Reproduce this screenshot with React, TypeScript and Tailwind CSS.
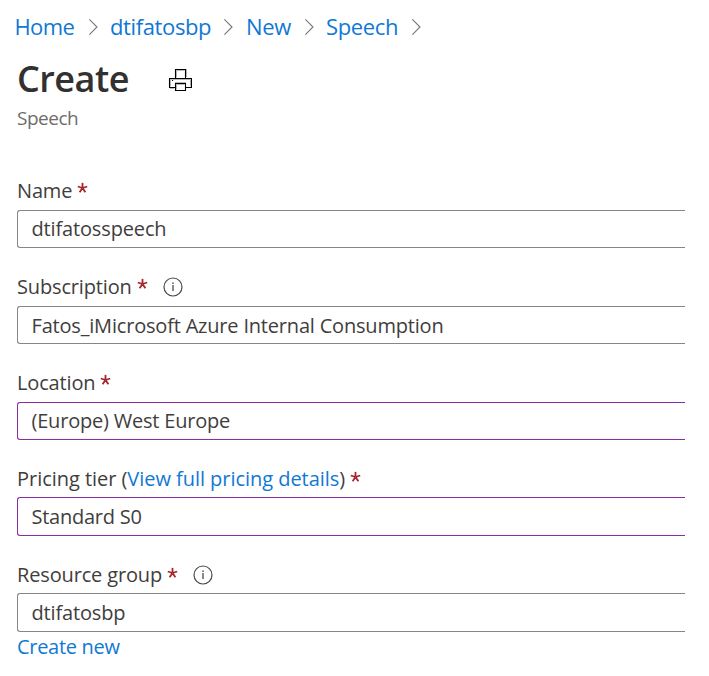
import type { ReactNode } from "react";

function Chevron() {
  return (
    <svg className="h-[18px] w-[9px] shrink-0" viewBox="0 0 9 18" fill="none" stroke="#767676" strokeWidth="1.1">
      <path d="M0.4 1.4 8 9 0.4 16.6" />
    </svg>
  );
}

function Printer() {
  return (
    <svg className="h-[24px] w-[24px] shrink-0" viewBox="0 0 24 24">
      <g fill="none" stroke="#b8b8b8" strokeWidth="1">
        <path d="M8.5 10.5v-7h8M18.5 10V2" />
        <path d="M2.5 19.5v-7h20v7M7 15.5h11M2 21.5h4" />
        <path d="M8.5 22.5v-5h8" />
      </g>
      <g fill="none" stroke="#000" strokeWidth="1.1">
        <path d="M7.5 11V2.5h10V11" />
        <path d="M7 20.5H1.5v-9h22v9H18" />
        <path d="M7.5 16.5h10v7h-10z" />
      </g>
      <path d="M4 13h1v1H4z" fill="#000" />
    </svg>
  );
}

function Info() {
  return (
    <svg className="ml-[15px] h-5 w-5 shrink-0" viewBox="0 0 20 20" fill="none" stroke="#4a4a4a">
      <circle cx="10" cy="10" r="9" strokeWidth="1.2" />
      <path d="M10 8v6" strokeWidth="1.3" />
      <path d="M10 5.5V7" strokeWidth="1.4" />
    </svg>
  );
}

function Required() {
  return (
    <svg className="ml-[5px] h-[11px] w-[11px] shrink-0 -translate-y-[2.5px]" viewBox="0 0 11 11" stroke="#a4262c" strokeWidth="1.8">
      <path d="M5.5 5.5V0.3M5.5 5.5 0.8 4M5.5 5.5 10.2 4M5.5 5.5 2.6 9.8M5.5 5.5 8.4 9.8" />
    </svg>
  );
}

type FieldProps = {
  label: ReactNode;
  value: string;
  info?: boolean;
  labelClass?: string;
  boxClass?: string;
  valueClass?: string;
};

function Field({
  label,
  value,
  info,
  labelClass = "h-[39px]",
  boxClass = "h-[38px] border-[#868686]",
  valueClass = "tracking-[-0.15px]",
}: FieldProps) {
  return (
    <div className="mb-[19px]">
      <div className={`flex items-center ${labelClass}`}>
        <span className="whitespace-pre">{label}</span>
        <Required />
        {info && <Info />}
      </div>
      <div className={`flex w-[668px] items-center rounded-l-[3px] border border-r-0 pl-[13.5px] ${boxClass}`}>
        <span className={valueClass}>{value}</span>
      </div>
    </div>
  );
}

export default function App() {
  return (
    <main className="h-[676px] w-[709px] overflow-hidden bg-white font-['Open_Sans','Noto_Sans',sans-serif] text-[20px] leading-[26px] tracking-[-0.15px] text-[#3f3e3d]">
      <nav className="flex h-[54px] items-center pl-[14.5px] text-[22px] text-[#0f78d4]">
        <a className="w-[74.5px] pb-[2px] tracking-[-0.6px]">Home</a>
        <Chevron />
        <a className="ml-3 w-[114px] pb-[2px] tracking-[-0.38px]">dtifatosbp</a>
        <Chevron />
        <a className="ml-[13px] w-[59px] pb-[2px] tracking-[-0.3px]">New</a>
        <Chevron />
        <a className="ml-3 w-[86px] pb-[2px] tracking-[-0.35px]">Speech</a>
        <Chevron />
      </nav>
      <header className="flex h-[50px] items-center pl-[17px]">
        <h1 className="w-[151px] text-[36px] font-semibold tracking-[-0.5px] text-[#323130]">Create</h1>
        <Printer />
      </header>
      <p className="flex h-[28px] items-center pl-[17px] text-[19px] tracking-[-0.5px] text-[#6e6c6a]">Speech</p>
      <form className="pt-[39px] pl-[17px]">
        <Field label="Name" value="dtifatosspeech" />
        <Field
          label="Subscription"
          value="Fatos_iMicrosoft Azure Internal Consumption"
          info
          valueClass="pt-[2px] tracking-[-0.19px]"
        />
        <Field
          label="Location"
          value="(Europe) West Europe"
          boxClass="h-[38px] border-[#8a2da5]"
          valueClass="tracking-[-0.2px]"
        />
        <Field
          label={<>Pricing tier (<a className="text-[#0f78d4]">View full pricing details</a>)</>}
          value="Standard S0"
          labelClass="h-[38px] pt-[2px] tracking-[-0.04px]"
          boxClass="h-[39px] border-[#8a2da5]"
          valueClass="tracking-[-0.25px]"
        />
        <Field
          label="Resource group"
          value="dtifatosbp"
          info
          labelClass="h-[38px] pt-[2px]"
          boxClass="h-[39px] border-[#868686]"
        />
      </form>
      <a className="-mt-[19px] flex h-[30px] items-center pl-[17px] tracking-[-0.3px] text-[#0f78d4]">Create new</a>
    </main>
  );
}
